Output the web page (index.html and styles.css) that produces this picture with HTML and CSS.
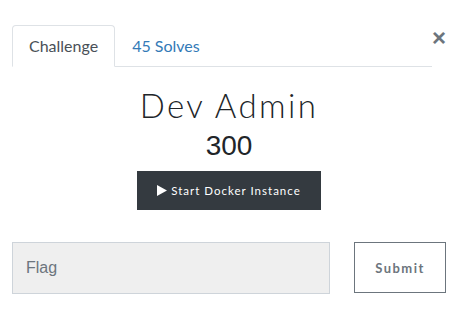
FILE: index.html
```html
<!DOCTYPE html>
<html lang="en">
<head>
  <meta charset="UTF-8">
  <title>Dev Admin</title>
  <link rel="stylesheet" href="styles.css">
</head>
<body>

  <div class="modal-body">
    <div class="modal-head">
      <ul class="nav-tabs">
        <li class="tab active">Challenge</li>
        <li class="tab">45 Solves</li>
      </ul>
      <span class="close-btn">&times;</span>
    </div>

    <div class="challenge">
      <h2 class="challenge-name">Dev Admin</h2>
      <h3 class="challenge-value">300</h3>
      <button type="button" class="docker-btn">
        <svg class="play" width="10" height="11" viewBox="0 0 10 11"><polygon points="0,0 10,5.5 0,11" fill="#ffffff"/></svg>
        Start Docker Instance
      </button>
    </div>

    <form class="submit-row">
      <input type="text" class="flag-input" placeholder="Flag">
      <button type="button" class="submit-btn">Submit</button>
    </form>
  </div>

</body>
</html>
```

FILE: styles.css
```css
body {
  margin: 0;
  padding: 0;
  font-family: Lato, "Open Sans", sans-serif;
  background-color: #ffffff;
  color: #212529;
}

.modal-body {
  width: 434px;
  padding: 25px 0 0 12px;
}

.modal-head {
  display: flex;
  align-items: flex-start;
}

.nav-tabs {
  flex: 1;
  display: flex;
  list-style: none;
  margin: 0;
  padding: 0;
  border-bottom: 1px solid #dee2e6;
}

.tab {
  padding: 9px 16px 9px 16px;
  font-size: 16px;
  line-height: 22px;
  color: #337ab7;
  border: 1px solid transparent;
  border-radius: 4px 4px 0 0;
  margin-bottom: -1px;
}

.tab.active {
  color: #495057;
  border-color: #dee2e6 #dee2e6 #ffffff;
  background-color: #ffffff;
}

.close-btn {
  width: 14px;
  margin-top: 1px;
  font-family: "Liberation Sans", Arial, sans-serif;
  font-size: 24px;
  font-weight: bold;
  line-height: 24px;
  color: #6c757d;
  text-align: right;
}

.challenge {
  display: flex;
  flex-direction: column;
  align-items: center;
}

.challenge-name {
  margin: 18px 0 0 0;
  font-family: Lato, sans-serif;
  font-weight: 300;
  font-size: 33px;
  line-height: 40px;
  letter-spacing: 2.4px;
  color: #212529;
}

.challenge-value {
  margin: 4px 0 0 0;
  font-family: "Liberation Sans", Arial, sans-serif;
  font-weight: normal;
  font-size: 28px;
  line-height: 34px;
  color: #212529;
}

.docker-btn {
  margin-top: 8px;
  width: 184px;
  height: 39px;
  display: flex;
  justify-content: center;
  align-items: center;
  gap: 4px;
  background-color: #343a40;
  color: #ffffff;
  border: none;
  border-radius: 0;
  font-family: Lato, sans-serif;
  font-size: 11.5px;
  letter-spacing: 1px;
  padding: 0;
}

.submit-row {
  display: flex;
  align-items: flex-start;
  gap: 24px;
  margin: 32px 0 0 0;
}

.flag-input {
  width: 318px;
  height: 52px;
  box-sizing: border-box;
  padding: 0 13px;
  background-color: #efefef;
  border: 1px solid #ced4da;
  font-family: "Liberation Sans", Arial, sans-serif;
  font-size: 16px;
  color: #495057;
}

.flag-input::placeholder {
  color: #6c757d;
}

.submit-btn {
  width: 92px;
  height: 51px;
  background-color: #ffffff;
  border: 1px solid #6c757d;
  color: #6c757d;
  font-family: Lato, sans-serif;
  font-weight: bold;
  font-size: 13px;
  letter-spacing: 1.5px;
}
```
